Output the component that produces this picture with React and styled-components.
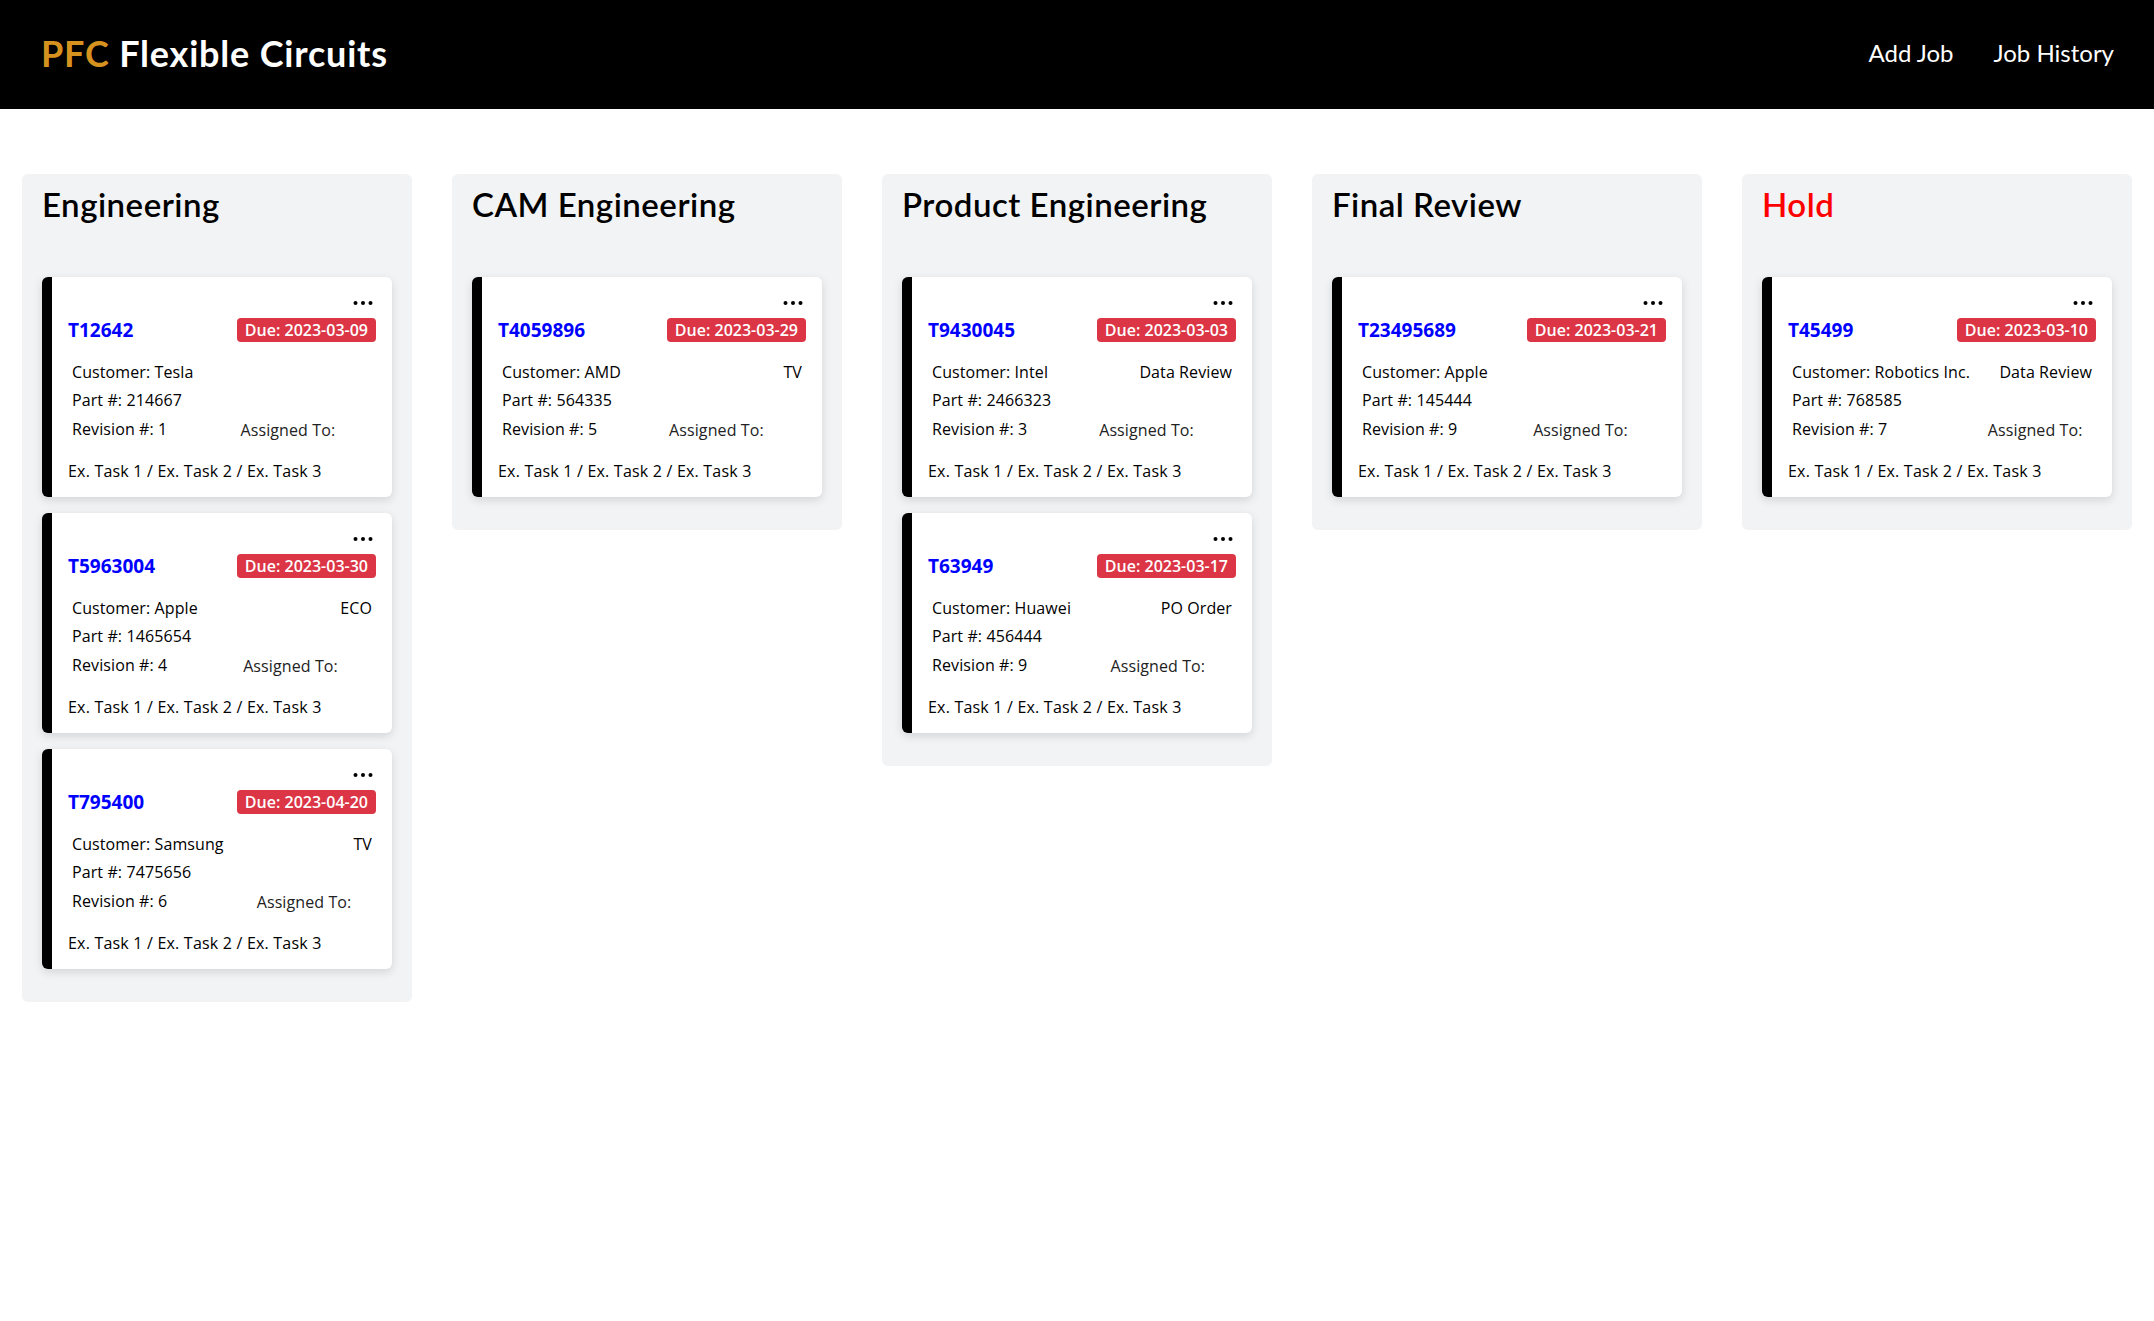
import React from 'react'
import styled, { createGlobalStyle } from 'styled-components'

const GlobalStyle = createGlobalStyle`
  body {
    margin: 0;
    background: #fff;
    font-family: "Open Sans", "Noto Sans", sans-serif;
    color: #000;
  }
`

const Navbar = styled.header`
  align-items: center;
  background: #000;
  box-sizing: border-box;
  display: flex;
  height: 109px;
  justify-content: space-between;
  padding: 0 40px 4px 41px;
`

const Brand = styled.div`
  color: #fff;
  font-family: Lato, sans-serif;
  font-size: 36px;
  font-weight: 700;
  letter-spacing: 0.8px;
`

const BrandAccent = styled.span`
  color: #d6921f;
`

const Nav = styled.nav`
  display: flex;
  gap: 40px;
`

const NavLink = styled.a`
  color: #fff;
  cursor: pointer;
  font-family: Lato, sans-serif;
  font-size: 24px;
  text-decoration: none;
`

const Board = styled.main`
  align-items: start;
  display: grid;
  gap: 40px;
  grid-template-columns: repeat(5, 1fr);
  padding: 65px 22px;
`

const Column = styled.section`
  background: #f2f3f5;
  border-radius: 6px;
  padding: 11px 20px 33px;
`

const ColumnTitle = styled.h2`
  color: ${props => props.color || '#000'};
  font-family: Lato, sans-serif;
  font-size: 33px;
  font-weight: 600;
  letter-spacing: 0.5px;
  line-height: 38px;
  margin: 0 0 54px;
`

const CardList = styled.div`
  display: flex;
  flex-direction: column;
  gap: 16px;
`

const Card = styled.article`
  background: #fff;
  border-left: 10px solid #000;
  border-radius: 6px;
  box-shadow: 0 3px 10px rgba(0, 0, 0, 0.13);
  padding: 16px 16px 12px;
`

const MenuRow = styled.div`
  align-items: center;
  display: flex;
  height: 20px;
  justify-content: flex-end;
  padding-right: 3px;
`

const TitleRow = styled.div`
  align-items: center;
  display: flex;
  height: 34px;
  justify-content: space-between;
`

const JobNumber = styled.a`
  color: #0000ff;
  font-size: 19px;
  font-weight: 700;
  text-decoration: none;
`

const DueBadge = styled.span`
  background: #dc3545;
  border-radius: 4px;
  color: #fff;
  font-size: 16px;
  font-weight: 600;
  height: 24px;
  line-height: 24px;
  padding: 0 8px;
`

const Details = styled.table`
  border-collapse: collapse;
  font-size: 16px;
  letter-spacing: 0.1px;
  margin: 11px 4px 0;
  width: calc(100% - 8px);

  td {
    height: 28px;
    padding: 0;
    white-space: nowrap;
  }
`

const Label = styled.td`
  font-weight: 500;
`

const TypeCell = styled.td`
  font-weight: 500;
  text-align: right;
`

const Assigned = styled.td`
  color: #222;
  font-weight: 400;
  padding-top: 2px !important;
`

const Tasks = styled.div`
  font-size: 16px;
  font-weight: 500;
  letter-spacing: 0.2px;
  line-height: 28px;
  margin-top: 13px;
`

const Dots = () => (
  <svg width="20" height="6" viewBox="0 0 20 6">
    <circle cx="2.5" cy="3" r="2" fill="#000" />
    <circle cx="10" cy="3" r="2" fill="#000" />
    <circle cx="17.5" cy="3" r="2" fill="#000" />
  </svg>
)

const columns = [
  {
    title: 'Engineering',
    jobs: [
      { id: 'T12642', due: '2023-03-09', customer: 'Tesla', part: '214667', rev: 1, type: '' },
      { id: 'T5963004', due: '2023-03-30', customer: 'Apple', part: '1465654', rev: 4, type: 'ECO' },
      { id: 'T795400', due: '2023-04-20', customer: 'Samsung', part: '7475656', rev: 6, type: 'TV' }
    ]
  },
  {
    title: 'CAM Engineering',
    jobs: [
      { id: 'T4059896', due: '2023-03-29', customer: 'AMD', part: '564335', rev: 5, type: 'TV' }
    ]
  },
  {
    title: 'Product Engineering',
    jobs: [
      { id: 'T9430045', due: '2023-03-03', customer: 'Intel', part: '2466323', rev: 3, type: 'Data Review' },
      { id: 'T63949', due: '2023-03-17', customer: 'Huawei', part: '456444', rev: 9, type: 'PO Order' }
    ]
  },
  {
    title: 'Final Review',
    jobs: [
      { id: 'T23495689', due: '2023-03-21', customer: 'Apple', part: '145444', rev: 9, type: '' }
    ]
  },
  {
    title: 'Hold',
    color: '#ff0000',
    jobs: [
      { id: 'T45499', due: '2023-03-10', customer: 'Robotics Inc.', part: '768585', rev: 7, type: 'Data Review' }
    ]
  }
]

const JobCard = ({ id, due, customer, part, rev, type }) => (
  <Card>
    <MenuRow><Dots /></MenuRow>
    <TitleRow>
      <JobNumber href="#">{id}</JobNumber>
      <DueBadge>Due: {due}</DueBadge>
    </TitleRow>
    <Details>
      <tbody>
        <tr>
          <Label>Customer: {customer}</Label>
          <TypeCell>{type}</TypeCell>
        </tr>
        <tr>
          <Label>Part #: {part}</Label>
          <td />
        </tr>
        <tr>
          <Label>Revision #: {rev}</Label>
          <Assigned>Assigned To:</Assigned>
        </tr>
      </tbody>
    </Details>
    <Tasks>Ex. Task 1 / Ex. Task 2 / Ex. Task 3</Tasks>
  </Card>
)

export default function App() {
  return (
    <>
      <GlobalStyle />
      <Navbar>
        <Brand><BrandAccent>PFC</BrandAccent> Flexible Circuits</Brand>
        <Nav>
          <NavLink>Add Job</NavLink>
          <NavLink>Job History</NavLink>
        </Nav>
      </Navbar>
      <Board>
        {columns.map(col => (
          <Column key={col.title}>
            <ColumnTitle color={col.color}>{col.title}</ColumnTitle>
            <CardList>
              {col.jobs.map(job => <JobCard key={job.id} {...job} />)}
            </CardList>
          </Column>
        ))}
      </Board>
    </>
  )
}
